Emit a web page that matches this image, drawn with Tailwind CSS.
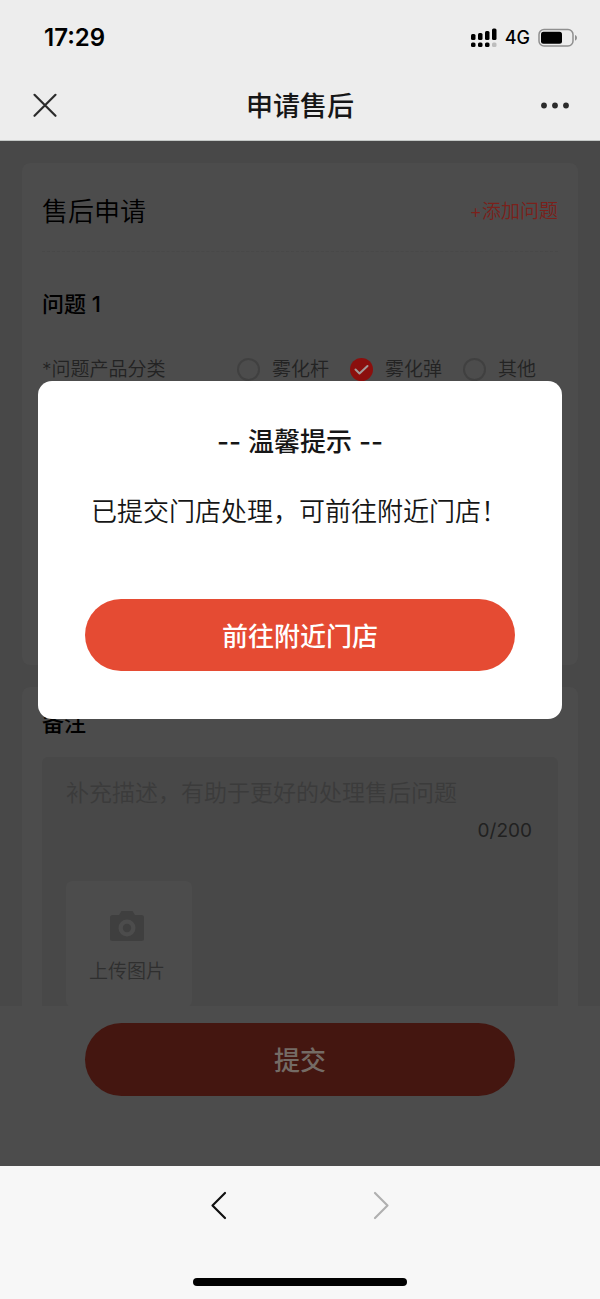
<!DOCTYPE html>
<html lang="zh-CN">
<head>
<meta charset="utf-8">
<meta name="viewport" content="width=device-width, initial-scale=1">
<title>申请售后</title>
<script src="https://cdn.jsdelivr.net/npm/@tailwindcss/browser@4"></script>
</head>
<body class="flex min-h-screen flex-col bg-[#f7f7f7] font-[Inter,'Noto_Sans_CJK_SC',sans-serif] text-black">

<header class="border-b border-[#c4c8c6] bg-[#ededed]">
  <div class="flex h-[74px] items-center justify-between pt-px pr-[22px] pl-11">
    <time class="text-2xl font-semibold">17:29</time>
    <div class="flex items-center gap-2">
      <svg class="h-5 w-[26px]" viewBox="0 0 26 20" aria-hidden="true">
        <g fill="#000">
          <rect x="0" y="6" width="4.500" height="6" rx="1.5"/><rect x="7" y="5" width="4.500" height="7" rx="1.5"/><rect x="14" y="3" width="4.500" height="9" rx="1.5"/><rect x="21" y="0.500" width="4.500" height="11.500" rx="1.5"/>
          <rect x="0" y="14.500" width="4.500" height="4.500" rx="1.500"/><rect x="7" y="14.500" width="4.500" height="4.500" rx="1.500"/><rect x="14" y="14.500" width="4.500" height="4.500" rx="1.500"/>
        </g>
        <rect x="21" y="14.500" width="4.500" height="4.500" rx="1.500" fill="#bdbdbd"/>
      </svg>
      <span class="text-lg font-medium">4G</span>
      <svg class="h-5 w-10" viewBox="0 0 40 20" aria-hidden="true">
        <rect x="1" y="1.500" width="34" height="16.500" rx="5" fill="none" stroke="#8f8f8f" stroke-width="1.500"/>
        <rect x="3" y="3.800" width="21" height="12" rx="2.500" fill="#000"/>
        <path d="M37 7c2.600.6 2.600 5 0 5.600z" fill="#8f8f8f"/>
      </svg>
    </div>
  </div>
  <div class="grid h-[66px] grid-cols-[1fr_auto_1fr] items-center px-[30px] pb-1">
    <button type="button" aria-label="关闭" class="justify-self-start">
      <svg class="size-[30px]" viewBox="0 0 30 30" fill="none" stroke="#2b2b2b" stroke-width="2.200" stroke-linecap="round"><path d="M4.500 4.800l21 21M25.500 4.800l-21 21"/></svg>
    </button>
    <h1 class="pt-1 text-[27px] leading-10 font-medium text-[#161616]">申请售后</h1>
    <button type="button" aria-label="更多" class="justify-self-end">
      <svg class="h-[30px] w-[30px]" viewBox="0 0 30 30" fill="#2b2b2b"><circle cx="4" cy="15.500" r="2.900"/><circle cx="15" cy="15.500" r="2.900"/><circle cx="26" cy="15.500" r="2.900"/></svg>
    </button>
  </div>
</header>

<main class="relative flex flex-1 flex-col bg-[#484848]">
  <form class="flex flex-1 flex-col">
    <div class="flex h-[865px] flex-col gap-[22px] overflow-hidden px-[22px] pt-[22px]">
      <section class="h-[502px] shrink-0 rounded-lg bg-[#4c4c4c] px-5">
        <div class="flex h-[89px] items-center justify-between border-b border-dashed border-[#484848] pt-[10px]">
          <h2 class="text-[26px] leading-10 font-[350]">售后申请</h2>
          <button type="button" class="text-[19px] leading-7 font-[350] text-[#7b201b]">+添加问题</button>
        </div>
        <h3 class="mt-9 text-[22px] leading-8 font-medium">问题 1</h3>
        <fieldset class="mt-8 text-[19px] leading-9 font-[350] text-[#232323]">
          <legend class="float-left w-[195px]">*问题产品分类</legend>
          <div class="flex items-center gap-[21px]">
            <label class="flex items-center gap-3"><input type="radio" name="category" class="mb-[2px] size-[23px] appearance-none rounded-full border-2 border-[#404040]">雾化杆</label>
            <label class="flex items-center gap-3">
              <span class="mb-[2px] grid">
                <input type="radio" name="category" checked class="col-start-1 row-start-1 size-[23px] appearance-none rounded-full bg-[#8b0f0d]">
                <svg class="pointer-events-none col-start-1 row-start-1 size-[23px]" viewBox="0 0 23 23" fill="none" stroke="#a39a99" stroke-width="2" stroke-linecap="round" stroke-linejoin="round"><path d="M5.500 11.500l4 4 8-7.500"/></svg>
              </span>雾化弹</label>
            <label class="flex items-center gap-3"><input type="radio" name="category" class="mb-[2px] size-[23px] appearance-none rounded-full border-2 border-[#404040]">其他</label>
          </div>
        </fieldset>
      </section>

      <section class="flex-1 rounded-t-lg bg-[#4c4c4c] px-5 pt-5">
        <h3 class="text-[22px] leading-8 font-medium"><label for="remark">备注</label></h3>
        <div class="mt-[18px] rounded-md bg-[#484848] px-6 pt-[18px] pb-10">
          <textarea id="remark" rows="1" maxlength="200" placeholder="补充描述，有助于更好的处理售后问题" class="block h-9 w-full resize-none text-[23px] leading-9 font-[350] placeholder:text-[#3b3b3b]"></textarea>
          <p class="mr-[2px] text-right text-[19px] leading-10 text-[#212121]">0/200</p>
          <button type="button" class="mt-[30px] flex size-[126px] flex-col items-center rounded-md bg-[#4c4c4c] pt-[27px] pr-1 text-[19px] leading-7 font-[350] text-[#2f2f2f]">
            <svg class="h-9 w-9" viewBox="0 0 36 36" aria-hidden="true"><path fill="#3f3f3f" fill-rule="evenodd" d="M11 5.500L12.500 3h11L25 5.500 26 7h6.500A2.500 2.500 0 0 1 35 9.500v21a2.500 2.500 0 0 1-2.500 2.500h-29A2.500 2.500 0 0 1 1 30.500v-21A2.500 2.500 0 0 1 3.500 7H10zM18 11.500a8.500 8.500 0 1 0 0 17 8.500 8.500 0 0 0 0-17z"/><circle cx="18" cy="20" r="4.200" fill="#3f3f3f"/></svg>
            <span class="mt-[14px]">上传图片</span>
          </button>
        </div>
      </section>
    </div>

    <div class="flex-1 bg-[#4c4c4c] px-[85px] pt-[17px]">
      <button type="submit" class="h-[73px] w-full rounded-full bg-[#441610] pt-[2px] text-[26px] font-medium text-[#746b65]">提交</button>
    </div>
  </form>

  <div class="absolute inset-x-0 top-60 px-[38px]">
    <div role="dialog" aria-modal="true" aria-labelledby="tip" class="flex flex-col items-center rounded-[14px] bg-white px-[47px] pt-[41px] pb-12">
      <h2 id="tip" class="text-[26px] leading-10 font-medium text-[#161616]">-- 温馨提示 --</h2>
      <p class="mt-[30px] w-full pl-[6px] text-[26px] leading-10 font-[350] whitespace-nowrap text-[#161616]">已提交门店处理，可前往附近门店！</p>
      <button type="button" class="mt-[67px] h-[72px] w-full rounded-full bg-[#e54b33] pt-[2px] text-[26px] font-medium text-white">前往附近门店</button>
    </div>
  </div>
</main>

<footer class="flex h-[133px] flex-col items-center justify-between bg-[#f7f7f7] pt-6 pb-[13px]">
  <nav class="flex gap-[132px]">
    <button type="button" aria-label="后退"><svg class="h-8 w-[30px]" viewBox="0 0 30 32" fill="none" stroke="#111" stroke-width="2.200" stroke-linecap="round" stroke-linejoin="round"><path d="M21 3L8.500 15.500 21 28"/></svg></button>
    <button type="button" aria-label="前进"><svg class="h-8 w-[30px]" viewBox="0 0 30 32" fill="none" stroke="#b0b0b0" stroke-width="2.200" stroke-linecap="round" stroke-linejoin="round"><path d="M9 3l12.500 12.500L9 28"/></svg></button>
  </nav>
  <div class="h-2 w-[214px] rounded-full bg-black"></div>
</footer>
</body>
</html>
